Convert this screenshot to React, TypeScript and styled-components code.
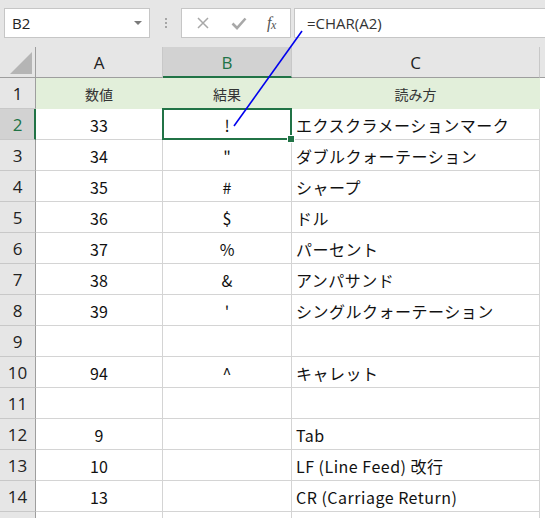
import React from 'react'
import styled, { createGlobalStyle, css } from 'styled-components'

const GlobalStyle = createGlobalStyle`
  html, body {
    margin: 0;
    padding: 0;
    background: #ffffff;
    overflow: hidden;
  }
  body {
    font-family: "Noto Sans CJK JP", "Noto Sans", sans-serif;
  }
`

const GREEN = '#217346'

const Page = styled.div`
  position: relative;
  width: 545px;
  height: 518px;
  overflow: hidden;
  background: #ffffff;
`

const TopBar = styled.div`
  height: 47px;
  background: #e6e6e6;
  display: flex;
  align-items: flex-start;
  padding: 8px 0 0 4px;
  box-sizing: border-box;
`

const NameBox = styled.div`
  width: 146px;
  height: 30px;
  box-sizing: border-box;
  background: #fff;
  border: 1px solid #c6c6c6;
  display: flex;
  align-items: center;
  justify-content: space-between;
  padding: 0 5px 0 7px;
  font-family: "Open Sans", "Noto Sans", sans-serif;
  font-size: 15px;
  color: #222;
`

const DropArrow = styled.span`
  width: 0;
  height: 0;
  border-left: 4px solid transparent;
  border-right: 4px solid transparent;
  border-top: 4px solid #7a7a7a;
  margin-right: 2px;
`

const Grip = styled.div`
  width: 31px;
  height: 30px;
  display: flex;
  flex-direction: column;
  align-items: center;
  justify-content: center;
  gap: 2px;
  span {
    width: 2px;
    height: 2px;
    background: #a6a6a6;
  }
`

const FxBox = styled.div`
  width: 110px;
  height: 30px;
  box-sizing: border-box;
  background: #fff;
  border: 1px solid #c6c6c6;
  display: flex;
  align-items: center;
  justify-content: space-around;
  padding: 0 4px;
`

const FxLabel = styled.span`
  font-family: "Liberation Serif", serif;
  font-style: italic;
  font-size: 16px;
  color: #555;
  letter-spacing: -0.5px;
  sub {
    font-size: 12px;
    vertical-align: -1px;
  }
`

const FormulaBox = styled.div`
  margin-left: 3px;
  flex: 1;
  height: 30px;
  box-sizing: border-box;
  background: #fff;
  border: 1px solid #c6c6c6;
  border-right: none;
  display: flex;
  align-items: center;
  padding-left: 12px;
  font-family: "Open Sans", "Noto Sans", sans-serif;
  font-size: 15px;
  color: #333;
`

const Sheet = styled.div`
  display: grid;
  grid-template-columns: 36px 127px 129px 248px 5px;
  grid-auto-rows: 31px;
`

const HeadCell = styled.div<{ $active?: boolean }>`
  box-sizing: border-box;
  background: ${(p) => (p.$active ? '#d2d2d2' : '#e6e6e6')};
  border-right: 1px solid #c8c8c8;
  border-bottom: ${(p) => (p.$active ? `2px solid ${GREEN}` : '1px solid #9e9e9e')};
  display: flex;
  align-items: center;
  justify-content: center;
  font-family: "Open Sans", "Noto Sans", sans-serif;
  font-size: 17px;
  color: ${(p) => (p.$active ? GREEN : '#222')};
  padding-top: ${(p) => (p.$active ? '1px' : '0')};
`

const Corner = styled(HeadCell)`
  border-right: 1px solid #9e9e9e;
  align-items: flex-end;
  justify-content: flex-end;
  padding: 0 3px 3px 0;
`

const Triangle = styled.span`
  width: 0;
  height: 0;
  border-left: 22px solid transparent;
  border-bottom: 22px solid #b5b5b5;
`

const HeadFiller = styled.div`
  background: #e6e6e6;
  border-bottom: 1px solid #9e9e9e;
  box-sizing: border-box;
`

const RowNum = styled.div<{ $active?: boolean }>`
  box-sizing: border-box;
  background: ${(p) => (p.$active ? '#d2d2d2' : '#e6e6e6')};
  border-right: ${(p) => (p.$active ? `2px solid ${GREEN}` : '1px solid #9e9e9e')};
  border-bottom: 1px solid #c8c8c8;
  display: flex;
  align-items: center;
  justify-content: center;
  font-family: "Open Sans", "Noto Sans", sans-serif;
  font-size: 17px;
  color: ${(p) => (p.$active ? GREEN : '#222')};
  padding-left: ${(p) => (p.$active ? '1px' : '0')};
`

const Cell = styled.div<{ $align?: 'center' | 'left'; $title?: boolean; $selected?: boolean }>`
  position: relative;
  box-sizing: border-box;
  background: ${(p) => (p.$title ? '#e2efda' : '#ffffff')};
  border-right: 1px solid ${(p) => (p.$title ? '#e2efda' : '#d4d4d4')};
  border-bottom: 1px solid ${(p) => (p.$title ? '#e2efda' : '#d4d4d4')};
  display: flex;
  align-items: center;
  justify-content: ${(p) => (p.$align === 'left' ? 'flex-start' : 'center')};
  padding: ${(p) => (p.$align === 'left' ? '1px 0 0 4px' : '1px 0 0 0')};
  font-size: ${(p) => (p.$title ? '14px' : '16px')};
  letter-spacing: ${(p) => (p.$align === 'left' ? '0.5px' : '0')};
  color: ${(p) => (p.$title ? '#333' : '#111')};
  white-space: nowrap;
  ${(p) =>
    p.$selected &&
    css`
      &::after {
        content: '';
        position: absolute;
        left: -1px;
        top: -1px;
        right: -1px;
        bottom: -1px;
        border: 2px solid ${GREEN};
      }
      &::before {
        content: '';
        position: absolute;
        right: -4px;
        bottom: -4px;
        width: 6px;
        height: 6px;
        background: ${GREEN};
        border: 1px solid #fff;
        z-index: 2;
      }
    `}
`

const Filler = styled.div`
  background: #fff;
`

const Arrow = styled.svg`
  position: absolute;
  left: 0;
  top: 0;
  pointer-events: none;
`

type Row = { n: number; a: string; b: string; c: string }

const rows: Row[] = [
  { n: 2, a: '33', b: '!', c: 'エクスクラメーションマーク' },
  { n: 3, a: '34', b: '"', c: 'ダブルクォーテーション' },
  { n: 4, a: '35', b: '#', c: 'シャープ' },
  { n: 5, a: '36', b: '$', c: 'ドル' },
  { n: 6, a: '37', b: '%', c: 'パーセント' },
  { n: 7, a: '38', b: '&', c: 'アンパサンド' },
  { n: 8, a: '39', b: "'", c: 'シングルクォーテーション' },
  { n: 9, a: '', b: '', c: '' },
  { n: 10, a: '94', b: '^', c: 'キャレット' },
  { n: 11, a: '', b: '', c: '' },
  { n: 12, a: '9', b: '', c: 'Tab' },
  { n: 13, a: '10', b: '', c: 'LF (Line Feed) 改行' },
  { n: 14, a: '13', b: '', c: 'CR (Carriage Return)' },
]

export default function App() {
  return (
    <Page>
      <GlobalStyle />
      <TopBar>
        <NameBox>
          B2
          <DropArrow />
        </NameBox>
        <Grip>
          <span />
          <span />
          <span />
        </Grip>
        <FxBox>
          <svg width="14" height="14" viewBox="0 0 14 14">
            <path d="M2 2 L12 12 M12 2 L2 12" stroke="#a8a8a8" strokeWidth="1.5" fill="none" />
          </svg>
          <svg width="16" height="14" viewBox="0 0 16 14">
            <path d="M1.5 7.5 L6 12 L14.5 2.5" stroke="#a8a8a8" strokeWidth="2.6" fill="none" />
          </svg>
          <FxLabel>
            f<sub>x</sub>
          </FxLabel>
        </FxBox>
        <FormulaBox>=CHAR(A2)</FormulaBox>
      </TopBar>
      <Sheet>
        <Corner>
          <Triangle />
        </Corner>
        <HeadCell>A</HeadCell>
        <HeadCell $active>B</HeadCell>
        <HeadCell>C</HeadCell>
        <HeadFiller />

        <RowNum>1</RowNum>
        <Cell $title>数値</Cell>
        <Cell $title>結果</Cell>
        <Cell $title>読み方</Cell>
        <Filler />

        {rows.map((r) => (
          <React.Fragment key={r.n}>
            <RowNum $active={r.n === 2}>{r.n}</RowNum>
            <Cell>{r.a}</Cell>
            <Cell $selected={r.n === 2}>{r.b}</Cell>
            <Cell $align="left">{r.c}</Cell>
            <Filler />
          </React.Fragment>
        ))}

        {/* partially visible row 15 */}
        <RowNum />
        <Cell />
        <Cell />
        <Cell />
        <Filler />
      </Sheet>
      <Arrow width="545" height="518">
        <line x1="302" y1="31" x2="234" y2="126" stroke="#0000ee" strokeWidth="1.6" />
      </Arrow>
    </Page>
  )
}
